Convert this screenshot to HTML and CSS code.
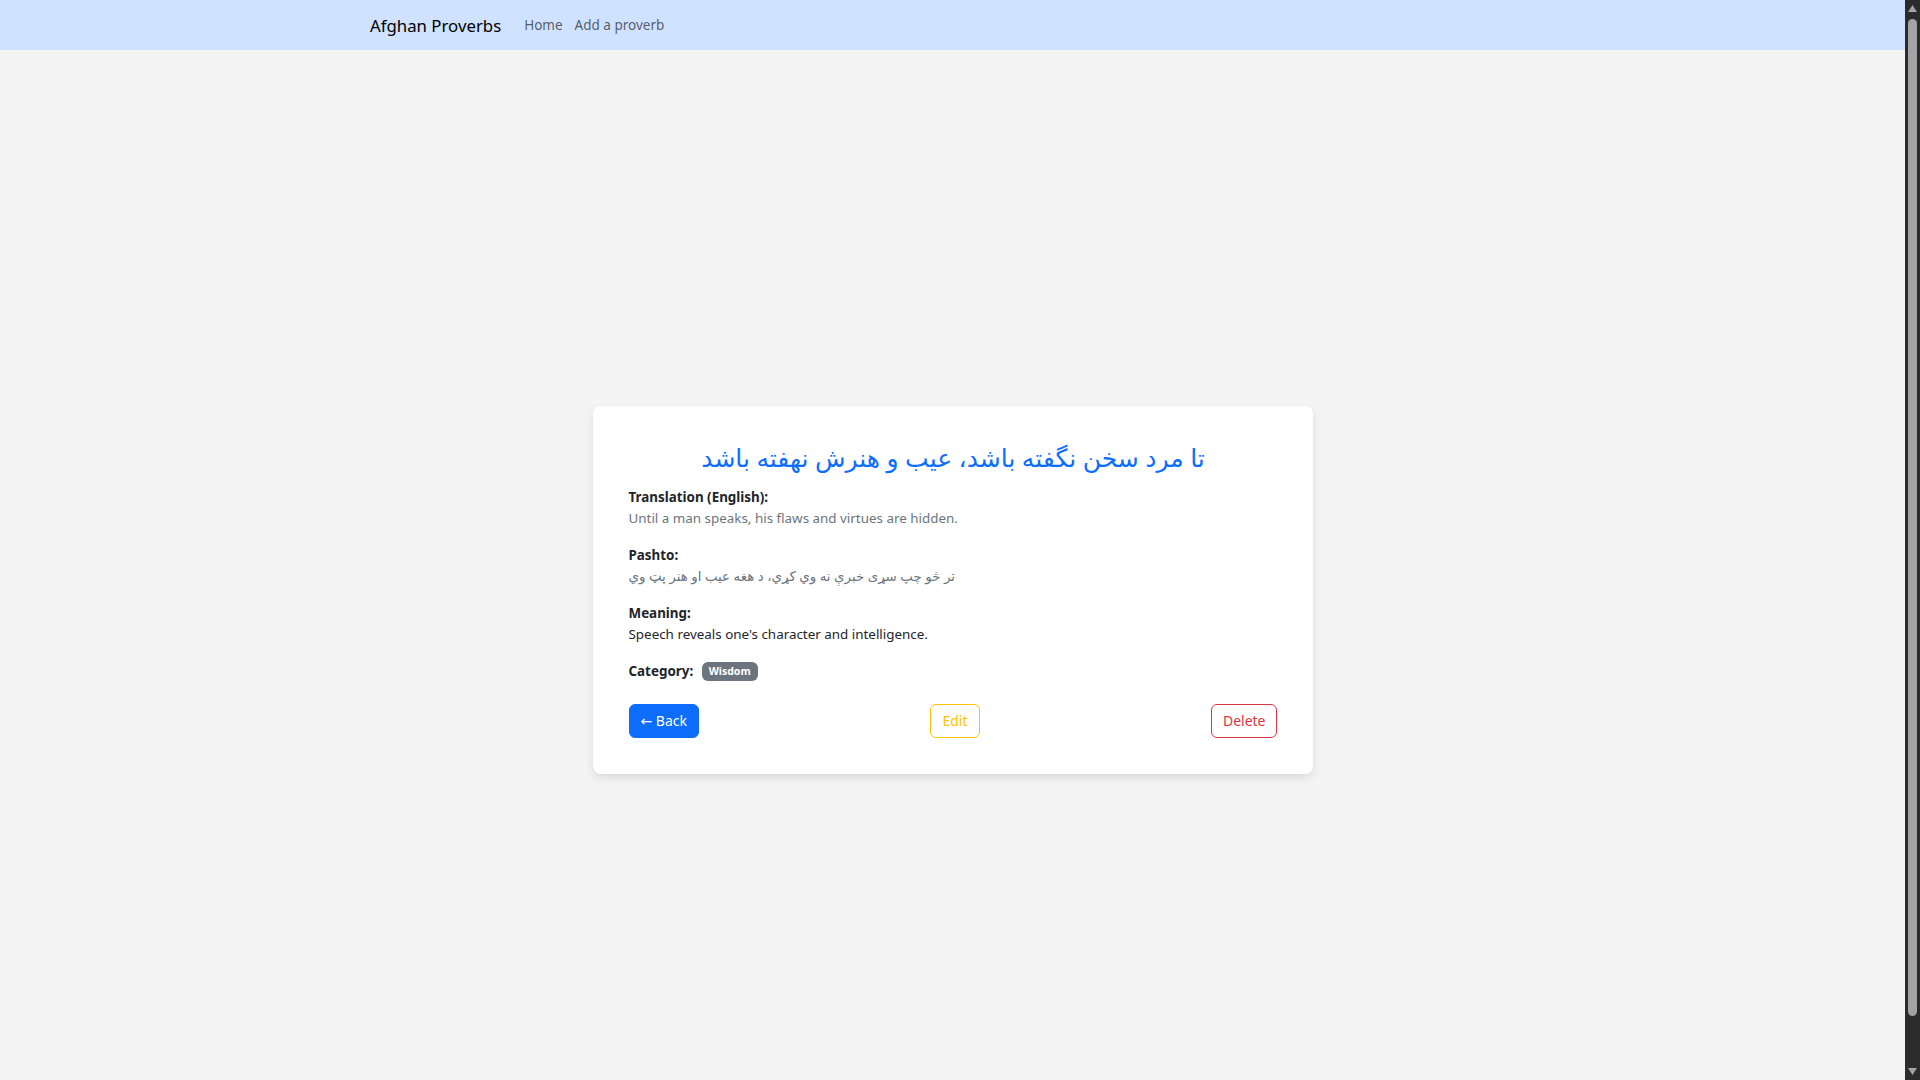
FILE: index.html
```html
<!DOCTYPE html>
<html lang="en">
<head>
<meta charset="utf-8">
<title>Afghan Proverbs</title>
<link rel="stylesheet" href="styles.css">
</head>
<body>
<div class="viewport">
  <nav class="navbar">
    <div class="nav-inner">
      <a class="brand" href="#">Afghan Proverbs</a>
      <ul class="nav-links">
        <li><a href="#">Home</a></li>
        <li><a href="#">Add a proverb</a></li>
      </ul>
    </div>
  </nav>
  <main class="page">
    <section class="card">
      <h2 class="title" dir="rtl">تا مرد سخن نگفته باشد، عیب و هنرش نهفته باشد</h2>
      <p class="field"><strong>Translation (English):</strong><br><span class="muted">Until a man speaks, his flaws and virtues are hidden.</span></p>
      <p class="field"><strong>Pashto:</strong><br><span class="muted" dir="rtl">تر څو چپ سړی خبرې نه وي کړي، د هغه عیب او هنر پټ وي</span></p>
      <p class="field"><strong>Meaning:</strong><br>Speech reveals one's character and intelligence.</p>
      <p class="field"><strong>Category:</strong> <span class="badge">Wisdom</span></p>
      <div class="actions">
        <a class="btn btn-primary" href="#">← Back</a>
        <a class="btn btn-warning" href="#">Edit</a>
        <a class="btn btn-danger" href="#">Delete</a>
      </div>
    </section>
  </main>
</div>
<div class="scrollbar" aria-hidden="true">
  <div class="sb-btn">
    <svg width="15" height="17" viewBox="0 0 15 17"><path d="M3 12h9L7.5 5z" fill="#a3a3a3"/></svg>
  </div>
  <div class="sb-track"><div class="sb-thumb"></div></div>
  <div class="sb-btn">
    <svg width="15" height="17" viewBox="0 0 15 17"><path d="M3 5h9L7.5 12z" fill="#a3a3a3"/></svg>
  </div>
</div>
</body>
</html>
```
FILE: styles.css
```css
html, body {
  margin: 0;
  padding: 0;
}
body {
  height: 100vh;
  overflow: hidden;
  display: flex;
  background: #f4f4f4;
  font-family: "Noto Sans", "DejaVu Sans", sans-serif;
  color: #212529;
  font-size: 13.4px;
  line-height: 21px;
}
a { text-decoration: none; }

.viewport {
  flex: 1;
  min-width: 0;
  overflow: hidden;
}

.scrollbar {
  flex: none;
  width: 15px;
  height: 100vh;
  background: #2b2b2b;
  display: flex;
  flex-direction: column;
}
.sb-btn {
  height: 17px;
  flex: none;
}
.sb-btn svg { display: block; }
.sb-track {
  flex: 1;
  padding: 2px 3px 0;
}
.sb-thumb {
  height: 997px;
  background: #a3a3a3;
  border-radius: 5px;
}

.navbar {
  background: #cfe2ff;
  height: 50px;
}
.nav-inner {
  max-width: 1165px;
  margin: 0 auto;
  height: 100%;
  display: flex;
  align-items: center;
}
.brand {
  color: #000;
  font-size: 16.8px;
  margin-right: 17px;
}
.nav-links {
  list-style: none;
  display: flex;
  margin: 0;
  padding: 0;
}
.nav-links a {
  display: block;
  padding: 0 6px;
  color: rgba(0, 0, 0, 0.62);
  font-size: 13.5px;
}

.page {
  min-height: 100vh;
  display: flex;
  align-items: center;
  justify-content: center;
}
.card {
  width: 720px;
  box-sizing: border-box;
  background: #fff;
  border-radius: 8px;
  padding: 36px 35px 36px 36px;
  box-shadow: 0 4px 10px rgba(0, 0, 0, 0.1);
}
.title {
  margin: 0 0 15px;
  text-align: center;
  color: #0d6efd;
  font-size: 25px;
  font-weight: 500;
  line-height: 1.2;
}
.field {
  margin: 0 0 16px;
}
.field strong {
  font-weight: 700;
}
.muted {
  color: #6c757d;
}
.badge {
  display: inline-block;
  background: #6c757d;
  color: #fff;
  font-size: 10.5px;
  font-weight: 700;
  line-height: 1;
  padding: 4px 7px;
  border-radius: 6px;
  vertical-align: 1px;
  margin-left: 5px;
}
.actions {
  display: flex;
  justify-content: space-between;
  margin-top: 22px;
}
.btn {
  display: inline-block;
  font-size: 14px;
  line-height: 20px;
  padding: 6px 11px;
  border-radius: 6px;
  border: 1px solid transparent;
}
.btn-primary {
  background: #0d6efd;
  border-color: #0d6efd;
  color: #fff;
}
.btn-warning {
  border-color: #ffc107;
  color: #ffc107;
}
.btn-danger {
  border-color: #dc3545;
  color: #dc3545;
}
```
